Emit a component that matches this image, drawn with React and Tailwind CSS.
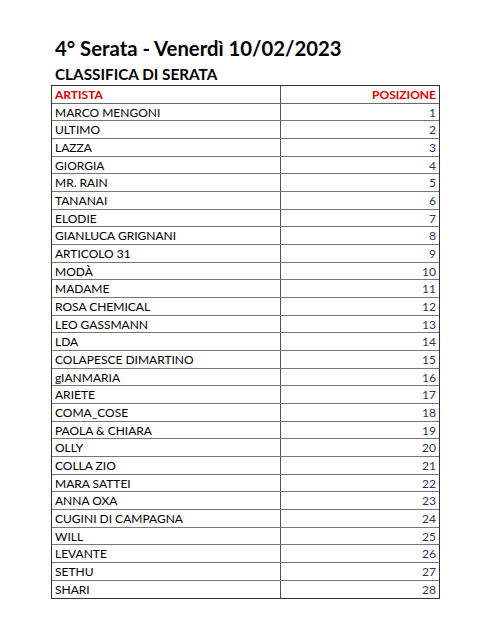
const rows = [
  'MARCO MENGONI',
  'ULTIMO',
  'LAZZA',
  'GIORGIA',
  'MR. RAIN',
  'TANANAI',
  'ELODIE',
  'GIANLUCA GRIGNANI',
  'ARTICOLO 31',
  'MODÀ',
  'MADAME',
  'ROSA CHEMICAL',
  'LEO GASSMANN',
  'LDA',
  'COLAPESCE DIMARTINO',
  'gIANMARIA',
  'ARIETE',
  'COMA_COSE',
  'PAOLA & CHIARA',
  'OLLY',
  'COLLA ZIO',
  'MARA SATTEI',
  'ANNA OXA',
  'CUGINI DI CAMPAGNA',
  'WILL',
  'LEVANTE',
  'SETHU',
  'SHARI',
]

export default function App() {
  return (
    <div className="w-[490px] h-[639px] bg-white pl-[51px] pt-[34px] font-['Lato','Open_Sans',sans-serif] text-black">
      <h1 className="pl-[4px] text-[20.3px] font-bold leading-[29px]">4° Serata - Venerdì 10/02/2023</h1>
      <h2 className="pl-[4px] mt-[1px] text-[15.3px] font-bold leading-[20px]">CLASSIFICA DI SERATA</h2>
      <div className="mt-[1px] w-[389px] border-[1.5px] border-[#333]">
        <div className="flex h-[17.6px] border-b border-[#666] text-[12px] font-bold leading-[17px] text-[#e00000]">
          <div className="w-[229px] pl-[3px] border-r border-[#555]">ARTISTA</div>
          <div className="flex-1 pr-[3px] text-right">POSIZIONE</div>
        </div>
        {rows.map((name, i) => (
          <div key={name} className="flex h-[17.68px] border-b border-[#777] last:border-b-0 text-[12px] leading-[17px]">
            <div className="w-[229px] pl-[3px] border-r border-[#555]">{name}</div>
            <div className="flex-1 pr-[3px] text-right text-[#1f3864]">{i + 1}</div>
          </div>
        ))}
      </div>
    </div>
  )
}
